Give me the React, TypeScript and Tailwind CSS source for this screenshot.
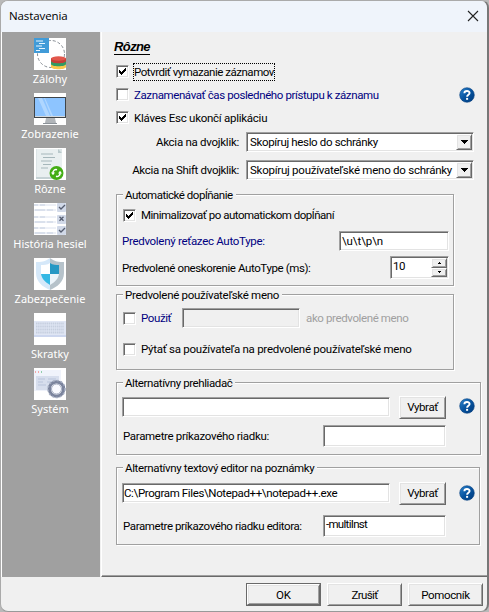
import React from "react";

const sunken =
  "box-border border border-t-[#a0a0a0] border-l-[#a0a0a0] border-r-white border-b-white shadow-[inset_1px_1px_0_#696969,inset_-1px_-1px_0_#e3e3e3]";
const raised =
  "box-border border border-t-white border-l-white border-r-[#696969] border-b-[#696969] bg-[#f0f0f0] shadow-[inset_1px_1px_0_#e3e3e3,inset_-1px_-1px_0_#a0a0a0]";

function Text({ children, className = "" }: { children: React.ReactNode; className?: string }) {
  return <span className={"block shrink-0 whitespace-pre " + className}>{children}</span>;
}

function Check({ on = false }: { on?: boolean }) {
  return (
    <span className={"block h-[13px] w-[13px] shrink-0 bg-white " + sunken}>
      {on && (
        <svg viewBox="0 0 11 11" className="block h-[11px] w-[11px]" shapeRendering="crispEdges">
          <path d="M2 4h1v1h1v1h1v-1h1v-1h1v-1h1v-1h1v3h-1v1h-1v1h-1v1h-1v1h-1v-1h-1v-1h-1z" fill="#000" />
        </svg>
      )}
    </span>
  );
}

function Field({ children, className = "" }: { children?: React.ReactNode; className?: string }) {
  return <div className={"flex shrink-0 items-center pl-[2px] " + sunken + " " + className}>{children}</div>;
}

function Combo({ children }: { children: React.ReactNode }) {
  return (
    <div className={"flex h-5 w-[228px] shrink-0 items-center bg-white p-px pl-[3px] " + sunken}>
      {children}
      <span className={"ml-auto flex h-4 w-4 shrink-0 items-center justify-center " + raised}>
        <svg width="7" height="4" viewBox="0 0 7 4" shapeRendering="crispEdges">
          <path d="M0 0h7v1h-1v1h-1v1h-1v1h-1v-1h-1v-1h-1v-1h-1z" />
        </svg>
      </span>
    </div>
  );
}

function Button({ children, className = "" }: { children: React.ReactNode; className?: string }) {
  return <button className={"flex shrink-0 items-center justify-center " + raised + " " + className}>{children}</button>;
}

function Help() {
  return (
    <svg className="block h-4 w-4 shrink-0" viewBox="0 0 16 16">
      <defs>
        <linearGradient id="helpBlue" x1="0" y1="0" x2="1" y2="1">
          <stop offset="0" stopColor="#2d86d0" />
          <stop offset="0.5" stopColor="#07539f" />
          <stop offset="1" stopColor="#003a7c" />
        </linearGradient>
      </defs>
      <circle cx="8" cy="8" r="7.3" fill="url(#helpBlue)" stroke="#063f80" strokeWidth="0.6" />
      <path d="M5.4 6.2C5.4 3.2 10.6 3.2 10.6 6.1C10.6 7.8 8.1 7.9 8.1 9.8" fill="none" stroke="#fff" strokeWidth="1.9" />
      <rect x="7.1" y="10.9" width="2" height="1.9" fill="#fff" />
    </svg>
  );
}

function Group({ title, tracking, className, children }: { title: string; tracking: string; className: string; children: React.ReactNode }) {
  return (
    <section className={"box-border flex shrink-0 flex-col border border-[#a0a0a0] shadow-[1px_1px_0_#fff,inset_1px_1px_0_#fff] " + className}>
      <h2 className={"-mt-[8px] ml-[6px] h-4 w-fit whitespace-pre bg-[#f0f0f0] pr-[3px] pl-[2px] leading-4 " + tracking}>{title}</h2>
      {children}
    </section>
  );
}

const icons: Record<string, React.ReactNode> = {
  backup: (
    <>
      <circle cx="17" cy="16" r="13.5" fill="none" stroke="#687078" strokeWidth="0.8" strokeDasharray="3 2" />
      <path d="M0 0h15v15H0z" fill="#419bd8" />
      <path d="M2 3h7M5 5.5h6M2 8h6M5 10.5h6M2 12.500h4" stroke="#e8f5ff" strokeWidth="1" />
      <path d="M17 26v3c0 3 15 3 15 0v-3" fill="#fac74d" />
      <path d="M17 23v3c0 3 15 3 15 0v-3" fill="#329b62" />
      <path d="M17 20v3c0 3 15 3 15 0v-3" fill="#c63f36" />
      <ellipse cx="24.5" cy="20.5" rx="7.5" ry="2.2" fill="#e2574c" />
    </>
  ),
  display: (
    <>
      <path d="M12 25h9l1 5H11z" fill="#b2b6ba" />
      <path d="M9 30h14v1H9z" fill="#8c9298" />
      <path d="M0 4h32v21H0z" fill="#3f454a" />
      <path d="M1 5h30v18H1z" fill="#8dc4ff" />
      <path d="M4 5h4l8 18h-4zM10 5h1l8 18h-2z" fill="#afd6ff" />
      <path d="M1 23h30v1H1z" fill="#d4d9dd" />
    </>
  ),
  misc: (
    <>
      <path d="M2 1h26v30H2z" fill="#dce4e6" />
      <path d="M3 1h21l4 4v24H3z" fill="#e9eff0" />
      <path d="M24 1v4h4" fill="#bac9cc" />
      <path d="M7 6h12M9 9.5h12M7 13h11M9 16.500h8M7 20h7" stroke="#a6b7bb" />
      <path d="M2 30h18" stroke="#aebfc2" />
      <circle cx="22.500" cy="25" r="7" fill="#43ad14" />
      <path d="M19 25.500c-.5-3 2-4.500 4-3.800M26 24.500c.5 3-2 4.500-4 3.800" fill="none" stroke="#fff" strokeWidth="1.5" />
      <path d="M17 24.500h4l-2 2.700zM24 25.500h4l-2-2.700z" fill="#fff" />
    </>
  ),
  history: (
    <>
      {[4, 16, 27].map((y) => (
        <g key={y}>
          <path d={`M0 ${y - 2}h22M0 ${y + 3}h22`} stroke="#dce2ef" />
          <path d={`M0 ${y - 2}h4M6 ${y - 2}h5M1 ${y + 3}h10M13 ${y + 3}h6`} stroke="#c7d0e1" />
          <rect x="23" y={y - 4} width="9" height="9" rx="1" fill="#d1d9e8" />
          {y === 16 ? (
            <path d="M25.500 13.800l4 4m0-4l-4 4" stroke="#555d70" strokeWidth="1.300" />
          ) : (
            <path d={`M25 ${y}l2 2 4-4`} fill="none" stroke="#555d70" strokeWidth="1.300" />
          )}
        </g>
      ))}
    </>
  ),
  security: (
    <>
      <path d="M16 0C11 4 7 4 2 4v11c0 9 7 14 14 17z" fill="#d5e8f9" />
      <path d="M16 0c5 4 9 4 14 4v11c0 9-7 14-14 17z" fill="#b6c2ca" />
      <path d="M16 5c-3 2-6 2-9 2v9h9z" fill="#fff" />
      <path d="M16 5c3 2 6 2 9 2v9h-9z" fill="#2798c4" />
      <path d="M7 16h9v11C11 24 8 21 7 16z" fill="#35b8e4" />
      <path d="M16 16h9c-1 5-4 8-9 11z" fill="#edf5fb" />
    </>
  ),
  keyboard: (
    <>
      <path d="M0 8h32v16H0z" fill="#e0e6f4" />
      <path d="M2 10.500h28M2 13.500h28M2 16.500h28M2 19.500h28" stroke="#c6cfdf" strokeWidth="1.800" strokeDasharray="1.500 .600" />
      <path d="M0 22h32v2H0z" fill="#ccd6ee" />
    </>
  ),
  system: (
    <>
      <path d="M0 2h27v21H0z" fill="#f0f3fb" />
      <path d="M1 4h1M4 4h1" stroke="#f4918f" strokeWidth="1.500" />
      <path d="M7 4h1" stroke="#71c291" strokeWidth="1.500" />
      <rect x="2" y="8" width="23" height="14" fill="#d7deed" />
      <path d="M4 11h7M4 14h5M4 17h8M14 11h8M13 14h5" stroke="#b9c4db" />
      <circle cx="22.500" cy="21" r="7.200" fill="#fff" stroke="#7b849d" strokeWidth="3.200" />
      <circle cx="22.500" cy="21" r="8.500" fill="none" stroke="#a5adc1" strokeWidth="1.500" strokeDasharray="2 2" />
      <circle cx="22.500" cy="21" r="5" fill="#f9faff" stroke="#a4acc0" />
    </>
  ),
};

const nav = [
  ["backup", "Zálohy"],
  ["display", "Zobrazenie"],
  ["misc", "Rôzne"],
  ["history", "História hesiel"],
  ["security", "Zabezpečenie"],
  ["keyboard", "Skratky"],
  ["system", "Systém"],
];

export default function App() {
  return (
    <div className="h-[612px] w-[489px] overflow-hidden bg-[#b9b9b9] font-['Roboto',sans-serif] text-[11.5px] leading-4 text-black">
      <main className="box-border flex h-[612px] w-[489px] flex-col overflow-hidden rounded-[8px] border border-t-[#aaa] border-r-2 border-r-[#777] border-b-[#999] border-l-[#aaa] bg-[#f0f0f0]">
        <header className="flex h-[31px] shrink-0 items-center bg-[#eff4fb] pr-[8px] pb-[2px] pl-[8px] font-['Open_Sans',sans-serif]">
          <Text className="tracking-[-0.1px]">Nastavenia</Text>
          <svg className="ml-auto" width="12" height="12" viewBox="0 0 12 12">
            <path d="M1 1l10 10M11 1L1 11" stroke="#222" strokeWidth="1.100" />
          </svg>
        </header>

        <div className="flex h-[545px] shrink-0 border-l border-white">
          <nav className="flex w-[98px] shrink-0 flex-col items-center bg-[#a0a0a0] pt-[6px] pr-[2px] font-['Noto_Sans',sans-serif] text-[11px] text-white">
            {nav.map(([icon, label]) => (
              <div key={icon} className="flex h-[55px] shrink-0 flex-col items-center">
                <svg className="block h-8 w-8 shrink-0 bg-white" viewBox="0 0 32 32">
                  {icons[icon]}
                </svg>
                <Text className="mt-px">{label}</Text>
              </div>
            ))}
          </nav>

          <div className="ml-px flex flex-1 flex-col border-b border-l border-b-[#696969] border-l-white pl-[14px] shadow-[inset_0_-1px_0_#a0a0a0]">
            <h1 className="mt-[6px] ml-[-2px] h-[17px] w-fit whitespace-pre border-b border-black font-['Liberation_Sans',sans-serif] text-[13px] leading-[17px] font-bold italic tracking-[-0.6px]">
              Rôzne
            </h1>
            <div className="mt-[5px] flex h-[23px] items-center">
              <Check on />
              <Text className="ml-1 border border-dotted border-black tracking-[-0.48px]">Potvrdiť vymazanie záznamov</Text>
            </div>
            <div className="flex h-[23px] items-center pr-[12px] text-[#000080]">
              <Check />
              <Text className="ml-[5px] tracking-[-0.39px]">Zaznamenávať čas posledného prístupu k záznamu</Text>
              <span className="ml-auto">
                <Help />
              </span>
            </div>
            <div className="flex h-[23px] items-center">
              <Check on />
              <Text className="ml-[5px] tracking-[-0.26px]">Kláves Esc ukončí aplikáciu</Text>
            </div>
            <div className="-mt-px flex h-[28px] items-center justify-end pr-[13px]">
              <Text className="mr-[7px] tracking-[-0.27px]">Akcia na dvojklik:</Text>
              <Combo>
                <Text className="tracking-[-0.34px]">Skopíruj heslo do schránky</Text>
              </Combo>
            </div>
            <div className="flex h-[28px] items-center justify-end pr-[13px]">
              <Text className="mr-[7px] tracking-[-0.32px]">Akcia na Shift dvojklik:</Text>
              <Combo>
                <Text className="tracking-[-0.25px]">Skopíruj používateľské meno do schránky</Text>
              </Combo>
            </div>

            <Group title="Automatické dopĺňanie" tracking="tracking-[-0.48px]" className="mt-[10px] h-[92px] w-[338px] pr-[4px]">
              <div className="ml-[6px] flex h-6 items-center">
                <Check on />
                <Text className="ml-[5px] tracking-[-0.49px]">Minimalizovať po automatickom dopĺňaní</Text>
              </div>
              <div className="ml-[5px] flex h-[27px] items-center">
                <Text className="text-[#000080] tracking-[-0.3px]">Predvolený reťazec AutoType:</Text>
                <Field className="ml-auto h-5 w-[110px] bg-white">
                  <Text className="tracking-[-0.1px]">\u\t\p\n</Text>
                </Field>
              </div>
              <div className="ml-[5px] flex h-[27px] items-center">
                <Text className="tracking-[-0.4px]">Predvolené oneskorenie AutoType (ms):</Text>
                <Field className="ml-auto h-[23px] w-[59px] bg-white pr-px">
                  <Text className="-mt-1 tracking-[-0.5px]">10</Text>
                  <span className="ml-auto flex flex-col">
                    {["M1 0h1v1h1v1H0V1h1z", "M0 0h3v1H2v1H1V1H0z"].map((d) => (
                      <span key={d} className={"flex h-[9.5px] w-4 items-center justify-center " + raised}>
                        <svg width="3" height="2" viewBox="0 0 3 2" shapeRendering="crispEdges">
                          <path d={d} />
                        </svg>
                      </span>
                    ))}
                  </span>
                </Field>
              </div>
            </Group>

            <Group title="Predvolené používateľské meno" tracking="tracking-[-0.3px]" className="mt-[8px] h-[76px] w-[338px]">
              <div className="mt-[2px] ml-[6px] flex h-[26px] items-center">
                <Check />
                <Text className="ml-[5px] w-[30px] text-[#000080] tracking-[-0.4px]">Použiť</Text>
                <Field className="ml-[11px] h-5 w-[118px]" />
                <Text className="ml-[6px] text-[#a0a0a0] tracking-[-0.38px]">ako predvolené meno</Text>
              </div>
              <div className="mt-[5px] ml-[6px] flex h-[26px] items-center">
                <Check />
                <Text className="ml-[5px] tracking-[-0.26px]">Pýtať sa používateľa na predvolené používateľské meno</Text>
              </div>
            </Group>

            <Group title="Alternatívny prehliadač" tracking="tracking-[-0.41px]" className="mt-[12px] h-[73px] w-[365px]">
              <div className="mt-[4px] ml-[5px] flex h-[24px] items-center">
                <Field className="h-5 w-[268px] bg-white" />
                <Button className="ml-[9px] h-[23px] w-[47px] tracking-[-0.4px]">Vybrať</Button>
                <span className="ml-[13px] pb-[3px]">
                  <Help />
                </span>
              </div>
              <div className="mt-[4px] ml-[6px] flex h-[26px] items-center">
                <Text className="w-[200px] tracking-[-0.32px]">Parametre príkazového riadku:</Text>
                <Field className="h-[22px] w-[123px] bg-white" />
              </div>
            </Group>

            <Group title="Alternatívny textový editor na poznámky" tracking="tracking-[-0.36px]" className="mt-[12px] h-[78px] w-[364px]">
              <div className="mt-[4px] ml-[5px] flex h-[26px] items-center">
                <Field className="h-5 w-[268px] bg-white">
                  <Text className="-ml-px tracking-[-0.37px]">C:\Program Files\Notepad++\notepad++.exe</Text>
                </Field>
                <Button className="ml-[9px] h-[23px] w-[47px] tracking-[-0.4px]">Vybrať</Button>
                <span className="ml-[13px]">
                  <Help />
                </span>
              </div>
              <div className="mt-[7px] ml-[6px] flex h-[26px] items-center">
                <Text className="w-[200px] tracking-[-0.4px]">Parametre príkazového riadku editora:</Text>
                <Field className="h-[22px] w-[123px] bg-white">
                  <Text className="-mt-1 tracking-[-0.7px]">-multiInst</Text>
                </Field>
              </div>
            </Group>
          </div>
        </div>

        <footer className="mt-[6px] flex justify-end gap-[6px] pr-[4px]">
          <div className="bg-[#696969] p-px">
            <Button className="h-[21px] w-[73px]">OK</Button>
          </div>
          <Button className="h-[23px] w-[75px] tracking-[-0.6px]">Zrušiť</Button>
          <Button className="h-[23px] w-[75px] tracking-[-0.35px]">Pomocník</Button>
        </footer>
      </main>
    </div>
  );
}
